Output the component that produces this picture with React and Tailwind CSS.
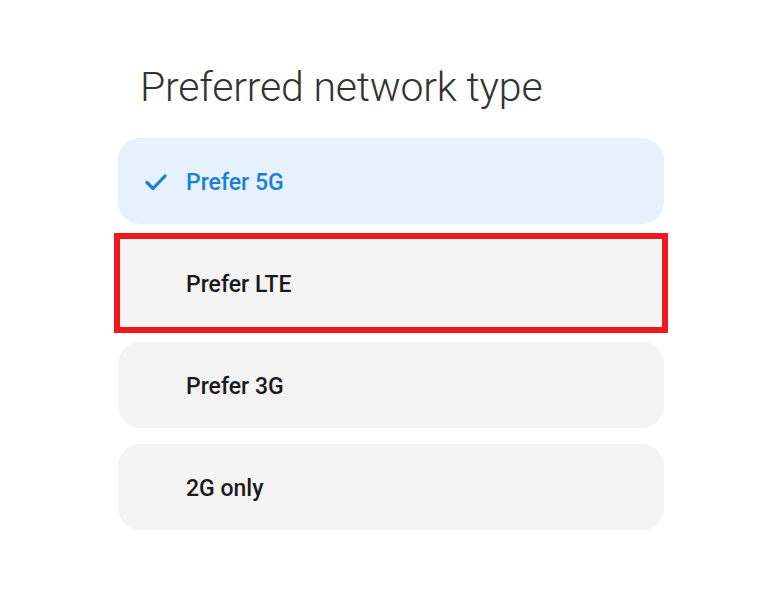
export default function App() {
  const font = { fontFamily: 'Roboto, "Noto Sans", sans-serif' };
  return (
    <div className="w-[780px] h-[600px] bg-white" style={font}>
      <div className="pl-[118px] pt-[67px] w-[664px]">
        <h1 className="pl-[22px] text-[41px] leading-[41px] font-light text-[#333333] tracking-[-0.2px]">
          Preferred network type
        </h1>
        <div className="mt-[30px] flex flex-col">
          <div className="h-[86px] rounded-[22px] bg-[#e5f1fc] flex items-center pl-[27px] pt-[2px]">
            <svg width="22" height="18" viewBox="0 0 22 18" className="mr-[19px]">
              <path d="M2 9.5 L8 15.5 L20 3" fill="none" stroke="#1b7fd6" strokeWidth="3.2" strokeLinecap="round" strokeLinejoin="round" />
            </svg>
            <span className="text-[23px] font-medium text-[#1b7fd6] pt-[2px]">Prefer 5G</span>
          </div>
          <div className="mt-[9px] -mx-[4px] h-[100px] border-[6px] border-[#f0171f] bg-[#f4f4f4] flex items-center pl-[66px] pt-[4px]">
            <span className="text-[23px] font-medium text-[#1a1a1a]">Prefer LTE</span>
          </div>
          <div className="mt-[9px] h-[86px] rounded-[22px] bg-[#f4f4f4] flex items-center pl-[68px] pt-[4px]">
            <span className="text-[23px] font-medium text-[#1a1a1a]">Prefer 3G</span>
          </div>
          <div className="mt-[16px] h-[86px] rounded-[22px] bg-[#f4f4f4] flex items-center pl-[68px] pt-[4px]">
            <span className="text-[23px] font-medium text-[#1a1a1a]">2G only</span>
          </div>
        </div>
      </div>
    </div>
  );
}
